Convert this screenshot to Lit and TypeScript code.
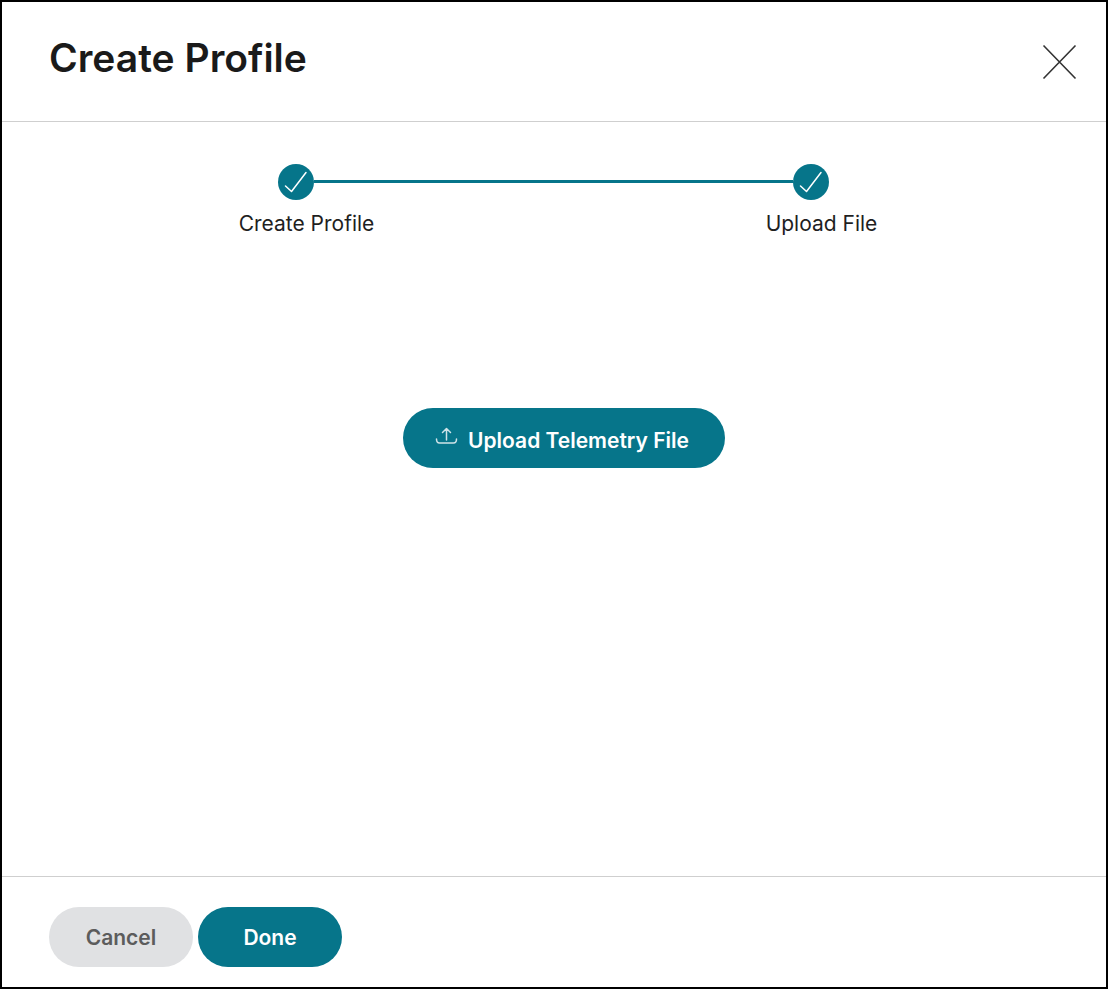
import { LitElement, html, css } from "lit";
import { customElement } from "lit/decorators.js";

const check = html`<svg class="check" viewBox="0 0 36 36" width="36" height="36" fill="none" stroke="#fff" stroke-width="1.5" stroke-linecap="round" stroke-linejoin="round"><path d="M7.5 22 L13.5 27.5 L28 8.5"/></svg>`;

@customElement("app-root")
export class AppRoot extends LitElement {
  static styles = css`
    :host { display: block; font-family: Inter, "Liberation Sans", sans-serif; }
    .dialog { box-sizing: border-box; width: 1108px; height: 989px; border: 2px solid #000; background: #fff; display: flex; flex-direction: column; }
    header { box-sizing: border-box; height: 120px; flex: none; border-bottom: 1px solid #cfcfcf; display: flex; justify-content: space-between; padding: 34px 29px 0 47px; }
    h1 { margin: 0; font-size: 39px; line-height: 44px; font-weight: 600; color: #1a1a1a; }
    .close { margin-top: 8px; width: 36px; height: 36px; display: block; }
    main { flex: 1; display: flex; flex-direction: column; align-items: center; padding-top: 42px; }
    .stepper { display: grid; grid-template-columns: 36px 479px 36px; row-gap: 10px; align-items: center; margin-left: -1px; }
    .dot { width: 36px; height: 36px; border-radius: 50%; background: #06758a; }
    .check { display: block; }
    .line { height: 3px; margin-bottom: 1px; background: #06758a; }
    .label { grid-row: 2; justify-self: center; white-space: nowrap; font-size: 21px; line-height: 28px; color: #1f1f1f; margin-left: 21px; }
    .label.a { grid-column: 1; }
    .label.b { grid-column: 3; }
    button { border: none; font-family: inherit; font-weight: 600; font-size: 21px; height: 60px; border-radius: 30px; padding: 0; display: flex; align-items: center; justify-content: center; }
    .primary { background: #06758a; color: #fff; }
    .secondary { background: #e0e1e3; color: #5c5c5c; }
    .upload { box-sizing: border-box; width: 322px; margin: 170px 0 0 20px; gap: 9px; padding: 4px 4px 0 0; }
    .upload svg { display: block; margin-top: -6px; }
    footer { box-sizing: border-box; height: 111px; flex: none; border-top: 1px solid #cfcfcf; display: flex; gap: 5px; padding: 30px 0 0 47px; }
    footer button { width: 144px; }
  `;

  render() {
    return html`
      <div class="dialog">
        <header>
          <h1>Create Profile</h1>
          <svg class="close" viewBox="0 0 36 36" fill="none" stroke="#333" stroke-width="1.6"><path d="M2.5 1.5 L34.5 34.5 M34.5 1.5 L2.5 34.5"/></svg>
        </header>
        <main>
          <div class="stepper">
            <div class="dot">${check}</div>
            <div class="line"></div>
            <div class="dot">${check}</div>
            <div class="label a">Create Profile</div>
            <div class="label b">Upload File</div>
          </div>
          <button class="primary upload">
            <svg viewBox="0 0 24 20" width="24" height="20" fill="none" stroke="#cfe3e8" stroke-width="1.5" stroke-linecap="round" stroke-linejoin="round"><path d="M11.5 13 V2 M7.5 5.5 L11.5 1.5 L15.5 5.5 M1.5 12 C1.5 15 2.5 16 4.5 16 H18.5 C20.5 16 21.5 15 21.5 12"/></svg>
            Upload Telemetry File
          </button>
        </main>
        <footer>
          <button class="secondary">Cancel</button>
          <button class="primary">Done</button>
        </footer>
      </div>
    `;
  }
}
